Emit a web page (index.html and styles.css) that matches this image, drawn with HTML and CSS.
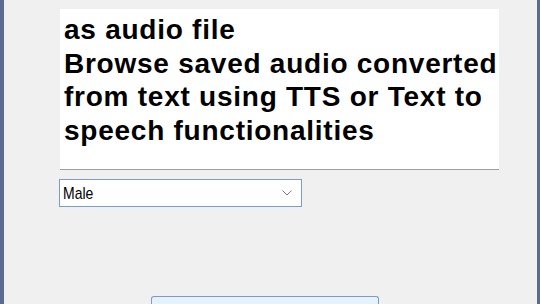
FILE: index.html
```html
<!doctype html>
<html lang="en">
  <head>
    <meta charset="UTF-8" />
    <meta name="viewport" content="width=device-width, initial-scale=1.0" />
    <title>Text to Speech</title>
    <link rel="stylesheet" href="styles.css">
  </head>
  <body>
    <div class="window">
      <div class="info-box">
        as audio file<br>
        Browse saved audio converted from text using TTS or Text to speech functionalities
      </div>

      <div class="combo">
        <span class="combo-text">Male</span>
        <svg class="combo-arrow" width="10" height="6" viewBox="0 0 10 6">
          <path d="M0.5 0.5 L5 5 L9.5 0.5" fill="none" stroke="#7a7a7a" stroke-width="1" />
        </svg>
      </div>

      <button class="convert-btn"></button>
    </div>
  </body>
</html>
```

FILE: styles.css
```css
body {
  margin: 0;
  width: 540px;
  height: 304px;
  overflow: hidden;
  background-color: #5c6a8d;
}

.window {
  margin-left: 4px;
  width: 533px;
  height: 304px;
  background-color: #f0f0f0;
  display: flex;
  flex-direction: column;
  align-items: flex-start;
  font-family: "Liberation Sans", Arial, sans-serif;
}

.window > * {
  flex-shrink: 0;
}

.info-box {
  margin-top: 9px;
  margin-left: 56px;
  width: 435px;
  height: 156px;
  padding: 4px 0 0 4px;
  background-color: #fff;
  border-bottom: 1px solid #a0a0a0;
  font-size: 28px;
  font-weight: bold;
  letter-spacing: 0.75px;
  line-height: 33.6px;
  color: #000;
}

.combo {
  margin-top: 9px;
  margin-left: 55px;
  width: 243px;
  height: 28px;
  border: 1px solid #7a9cd3;
  background-color: #fff;
  display: flex;
  align-items: center;
  justify-content: space-between;
  padding: 0 9px 0 3px;
  box-sizing: border-box;
}

.combo-text {
  font-size: 14px;
  color: #000;
  transform: scaleY(1.15);
}

.convert-btn {
  margin-top: 89px;
  margin-left: 147px;
  width: 228px;
  height: 8px;
  border: 1px solid #7a9ad0;
  border-bottom: none;
  border-radius: 3px 3px 0 0;
  background-color: #e5f1fb;
}
```
